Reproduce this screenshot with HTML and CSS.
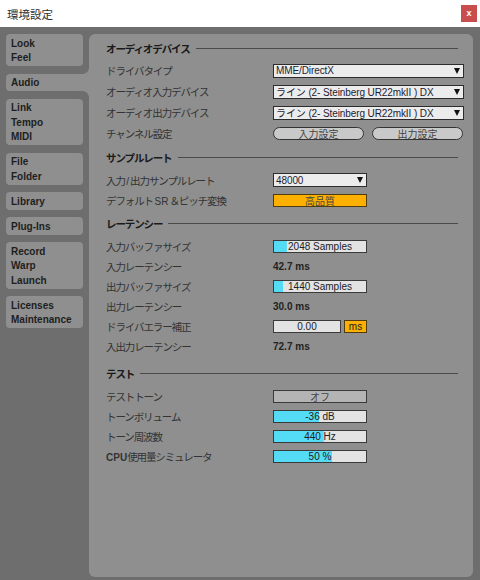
FILE: index.html
```html
<!DOCTYPE html>
<html lang="ja">
<head>
    <meta charset="UTF-8">
    <meta name="viewport" content="width=device-width, initial-scale=1.0">
    <title>環境設定</title>
    <link rel="stylesheet" href="styles.css">
</head>
<body>
    <div class="titlebar">
        <span class="title">環境設定</span>
        <span class="close">x</span>
    </div>

    <div class="window">
        <nav class="sidebar">
            <div class="tab"><div>Look</div><div>Feel</div></div>
            <div class="tab active"><div>Audio</div></div>
            <div class="tab"><div>Link</div><div>Tempo</div><div>MIDI</div></div>
            <div class="tab"><div>File</div><div>Folder</div></div>
            <div class="tab"><div>Library</div></div>
            <div class="tab"><div>Plug-Ins</div></div>
            <div class="tab"><div>Record</div><div>Warp</div><div>Launch</div></div>
            <div class="tab"><div>Licenses</div><div>Maintenance</div></div>
        </nav>

        <main class="panel">
            <section class="section audio">
                <h2 class="heading"><span>オーディオデバイス</span></h2>
                <div class="row">
                    <span class="label">ドライバタイプ</span>
                    <div class="select wide"><span>MME/DirectX</span><i class="arrow"></i></div>
                </div>
                <div class="row">
                    <span class="label">オーディオ入力デバイス</span>
                    <div class="select wide"><span>ライン (2- Steinberg UR22mkII ) DX</span><i class="arrow"></i></div>
                </div>
                <div class="row">
                    <span class="label">オーディオ出力デバイス</span>
                    <div class="select wide"><span>ライン (2- Steinberg UR22mkII ) DX</span><i class="arrow"></i></div>
                </div>
                <div class="row">
                    <span class="label">チャンネル設定</span>
                    <div class="buttons">
                        <button class="pill">入力設定</button>
                        <button class="pill">出力設定</button>
                    </div>
                </div>
            </section>

            <section class="section">
                <h2 class="heading"><span>サンプルレート</span></h2>
                <div class="row">
                    <span class="label">入力<span class="latin">/</span>出力サンプルレート</span>
                    <div class="select"><span>48000</span><i class="arrow"></i></div>
                </div>
                <div class="row">
                    <span class="label">デフォルト<span class="latin">SR</span>＆ピッチ変換</span>
                    <div class="box orange">高品質</div>
                </div>
            </section>

            <section class="section latency">
                <h2 class="heading"><span>レーテンシー</span></h2>
                <div class="row">
                    <span class="label">入力バッファサイズ</span>
                    <div class="box meter" style="--fill: 14%">2048 Samples</div>
                </div>
                <div class="row">
                    <span class="label">入力レーテンシー</span>
                    <span class="value">42.7 ms</span>
                </div>
                <div class="row">
                    <span class="label">出力バッファサイズ</span>
                    <div class="box meter" style="--fill: 10%">1440 Samples</div>
                </div>
                <div class="row">
                    <span class="label">出力レーテンシー</span>
                    <span class="value">30.0 ms</span>
                </div>
                <div class="row">
                    <span class="label">ドライバエラー補正</span>
                    <div class="pair">
                        <div class="box number">0.00</div>
                        <div class="box orange unit">ms</div>
                    </div>
                </div>
                <div class="row">
                    <span class="label">入出力レーテンシー</span>
                    <span class="value">72.7 ms</span>
                </div>
            </section>

            <section class="section">
                <h2 class="heading"><span>テスト</span></h2>
                <div class="row">
                    <span class="label">テストトーン</span>
                    <div class="box toggle">オフ</div>
                </div>
                <div class="row">
                    <span class="label">トーンボリューム</span>
                    <div class="box meter" style="--fill: 49%">-36 dB</div>
                </div>
                <div class="row">
                    <span class="label">トーン周波数</span>
                    <div class="box meter" style="--fill: 54%">440 Hz</div>
                </div>
                <div class="row">
                    <span class="label"><b>CPU</b>使用量シミュレータ</span>
                    <div class="box meter" style="--fill: 63%">50 %</div>
                </div>
            </section>
        </main>
    </div>
</body>
</html>
```

FILE: styles.css
```css
html, body {
    margin: 0;
    height: 100%;
}

body {
    font-family: "Liberation Sans", "Noto Sans CJK JP", sans-serif;
    font-size: 10px;
    background-color: #6e6e6e;
    color: #222;
    display: flex;
    flex-direction: column;
}

.titlebar {
    height: 27px;
    background: #ffffff;
    display: flex;
    align-items: center;
    padding: 0 3px 0 7px;
    flex-shrink: 0;
}

.title {
    font-family: "Noto Sans CJK JP", sans-serif;
    font-size: 11.5px;
    color: #2e2e2e;
    flex: 1;
}

.close {
    width: 16px;
    height: 17px;
    background: #c94d4d;
    color: white;
    font-weight: bold;
    font-size: 9px;
    display: flex;
    align-items: center;
    justify-content: center;
    margin-top: -1px;
}

.window {
    flex: 1;
    display: flex;
    padding: 7px 7px 3px 6px;
    gap: 6px;
}

.sidebar {
    width: 77px;
    display: flex;
    flex-direction: column;
    gap: 7.5px;
}

.tab {
    background: #8f8f8f;
    border-radius: 4px;
    padding: 2.5px 5px 0.5px;
    font-weight: bold;
    line-height: 14.5px;
    color: #1e1e1e;
    position: relative;
}

.tab.active {
    margin-right: -6px;
    border-radius: 4px 0 0 4px;
}

.tab.active::before,
.tab.active::after {
    content: "";
    position: absolute;
    right: 0;
    width: 6px;
    height: 6px;
}

.tab.active::before {
    top: -6px;
    background: radial-gradient(circle at 0 0, transparent 5.5px, #8f8f8f 6px);
}

.tab.active::after {
    bottom: -6px;
    background: radial-gradient(circle at 0 100%, transparent 5.5px, #8f8f8f 6px);
}

.panel {
    flex: 1;
    background: #8f8f8f;
    border-radius: 6px;
    padding: 7px 9px 0 17px;
}

.section {
    margin-bottom: 6px;
}

.section.latency {
    margin-bottom: 10px;
}

.heading {
    margin: 0 6px 6px 0;
    height: 14px;
    display: flex;
    align-items: center;
    gap: 6px;
    font-size: 10.5px;
    font-weight: bold;
    letter-spacing: -1.1px;
    color: #1a1a1a;
}

.heading::after {
    content: "";
    flex: 1;
    height: 1px;
    background: #4a4a4a;
    margin-top: 1px;
}

.audio .heading {
    margin-bottom: 5px;
}

.row {
    height: 20px;
    display: flex;
    align-items: center;
}

.audio .row {
    height: 21px;
}

.label {
    width: 167px;
    flex-shrink: 0;
    color: #333;
    font-size: 10.5px;
    letter-spacing: -1.1px;
    white-space: nowrap;
}

.label b,
.label .latin {
    font-size: 10px;
    letter-spacing: 0;
}

.label .latin {
    margin: 0 1px 0 1.5px;
}

.value {
    font-weight: bold;
    color: #222;
}

.select {
    width: 94px;
    height: 14px;
    box-sizing: border-box;
    background: #ececec;
    border: 1px solid #2c2c2c;
    display: flex;
    align-items: center;
    padding: 0 3px 0 2px;
    color: #1c1c34;
    white-space: nowrap;
}

.select.wide {
    width: 191px;
}

.select span {
    flex: 1;
    letter-spacing: -0.1px;
}

.arrow {
    width: 0;
    height: 0;
    border-left: 3.5px solid transparent;
    border-right: 3.5px solid transparent;
    border-top: 6px solid #111;
}

.buttons {
    display: flex;
    gap: 8px;
}

.pill {
    width: 91px;
    height: 13px;
    padding: 0;
    border: 1px solid #333;
    border-radius: 7px;
    background: #c9c9c9;
    font-family: "Noto Sans CJK JP", sans-serif;
    font-size: 10px;
    line-height: 11px;
    color: #444;
}

.box {
    width: 94px;
    height: 13px;
    box-sizing: border-box;
    border: 1px solid #3a3a3a;
    background: #e3e3e3;
    display: flex;
    align-items: center;
    justify-content: center;
    color: #222;
}

.orange {
    background: #fdb000;
    border-color: #4f3d10;
    color: #444;
}

.toggle {
    background: #b4b4b4;
    color: #444;
}

.meter {
    background: linear-gradient(#54dbf5, #54dbf5) no-repeat 0 0 / var(--fill) 100%, #e3e3e3;
}

.pair {
    display: flex;
    gap: 3px;
}

.box.number {
    width: 68px;
}

.box.unit {
    width: 23px;
    color: #222;
}
```
